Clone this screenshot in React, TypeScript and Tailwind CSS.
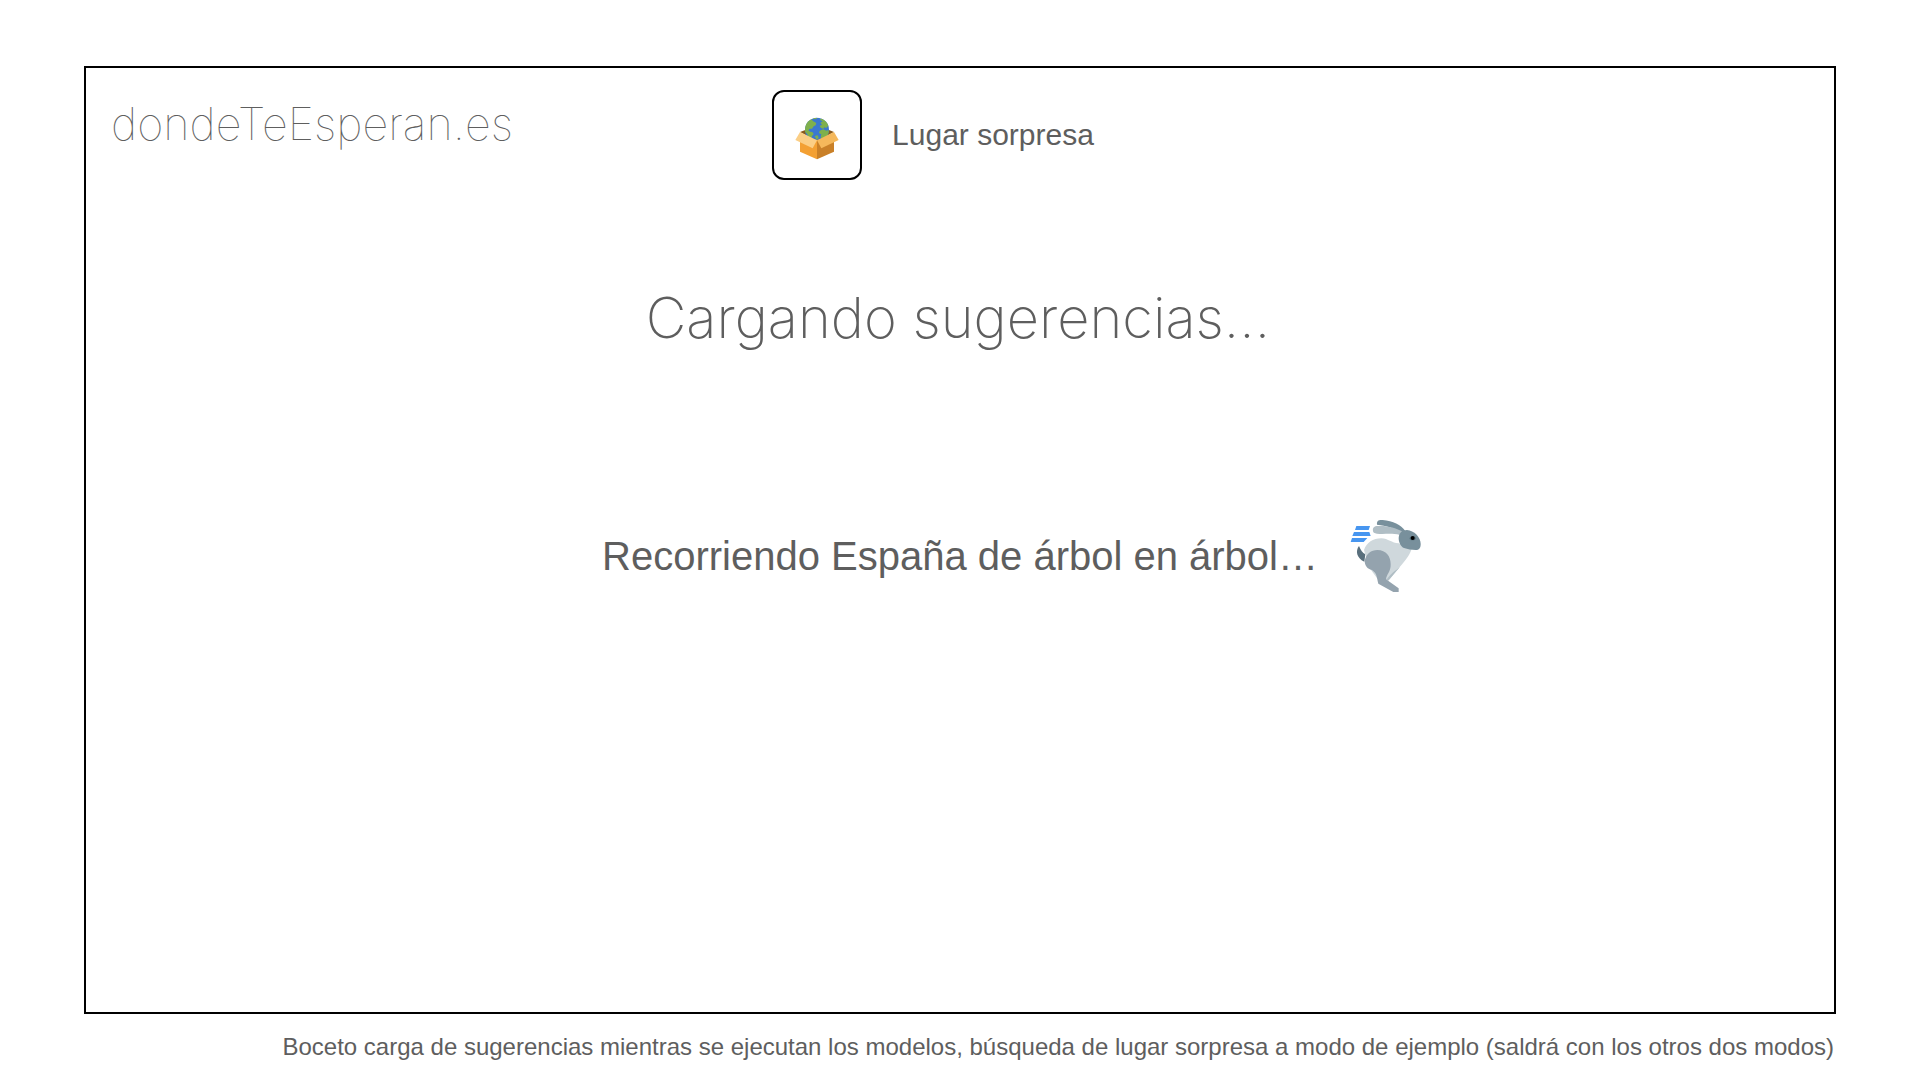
function SurpriseBoxIcon() {
  return (
    <svg viewBox="45 51 132 129" className="h-[43px] w-[44px]" aria-hidden="true">
      <path d="M60 96 76 90 H147 L162 96 111 124Z" fill="#8a5a1c" />
      <clipPath id="globe">
        <circle cx="111" cy="89" r="36" />
      </clipPath>
      <g clipPath="url(#globe)">
        <rect x="74" y="52" width="74" height="75" fill="#3b78d0" />
        <path d="M74 74 84 61 96 57 98 63 104 66 109 69 107 76 101 79 96 86 89 86 85 91 90 95 97 96 101 102 96 108 93 121 85 115 82 102 74 95Z" fill="#7fb04c" />
        <path d="M98 54 112 52 110 56 102 58Z" fill="#7fb04c" />
        <path d="M123 54 136 61 144 70 148 80 143 79 139 84 133 82 130 86 123 84 119 78 126 74 121 68 128 64 120 60Z" fill="#7fb04c" />
        <path d="M119 92 130 88 139 92 145 90 148 98 140 112 128 120 122 112 124 103 117 99Z" fill="#7fb04c" />
        <path d="M104 108 113 106 116 114 110 119Z" fill="#7fb04c" />
      </g>
      <path d="M60 107 111 120 V178 L60 155Z" fill="#f3a033" />
      <path d="M162 107 111 120 V178 L162 155Z" fill="#c98028" />
      <path d="M60 96 111 121 98 145 46 120Z" fill="#fbce85" />
      <path d="M162 96 111 121 124 145 176 120Z" fill="#f5b85b" />
    </svg>
  );
}

function RabbitIcon() {
  return (
    <svg viewBox="28 26 216 222" className="h-[74px] w-[72px]" aria-hidden="true">
      <path d="M47 47H88L84 59H43Z" fill="#4796f0" />
      <path d="M40 65H86L90 77H35Z" fill="#4796f0" />
      <path d="M34 83H80L69 95H30Z" fill="#4796f0" />
      <path d="M55 107C44 121 47 143 71 154L74 132C65 128 61 120 55 107Z" fill="#596f7c" />
      <path d="M109 43C108 32 113 28 126 29C157 32 181 43 194 62L181 69C159 51 137 47 109 43Z" fill="#78909c" />
      <path d="M97 62C95 51 102 46 114 47C143 46 165 53 184 63L178 74C150 67 132 73 109 70C101 69 97 67 97 62Z" fill="#b0bec5" />
      <path d="M70 119C78 97 97 84 122 84C143 85 153 98 174 99L213 116C204 142 184 162 165 184L143 211L111 206L85 171Z" fill="#cfd8dc" />
      <path d="M178 170C165 181 148 190 137 210L144 210L165 185Z" fill="#b0bec5" />
      <path d="M72 151C77 130 91 119 110 119C137 119 150 139 150 161C151 184 137 192 136 207L174 234V245H158L113 220C108 202 110 190 94 179C80 176 72 165 72 151Z" fill="#94a3ae" />
      <path d="M174 86C173 68 185 59 199 59C220 60 240 81 240 101C240 113 235 119 225 119C213 119 201 117 190 113C180 109 175 97 174 86Z" fill="#78909c" />
      <ellipse cx="216" cy="84" rx="9" ry="6" fill="#546e7a" />
      <circle cx="216" cy="83" r="6" fill="#000" />
    </svg>
  );
}

export default function App() {
  return (
    <div className="flex min-h-screen flex-col bg-white px-[84px] pt-[66px] font-['Liberation_Sans',Arial,sans-serif] text-[#5e5e5e]">
      <main className="flex min-h-[948px] flex-col border-2 border-black">
        <header className="grid grid-cols-[1fr_auto_1fr] items-start pt-[22px]">
          <a href="#" className="justify-self-start pl-[25px] font-['Inter',sans-serif] text-[45px] leading-[68px] font-thin">
            dondeTeEsperan.es
          </a>
          <div className="flex items-center gap-[30px] pr-[54px]">
            <button
              type="button"
              aria-label="Lugar sorpresa"
              className="flex h-[90px] w-[90px] items-center justify-center rounded-xl border-2 border-black pt-1.5"
            >
              <SurpriseBoxIcon />
            </button>
            <span className="text-[30px] leading-9">Lugar sorpresa</span>
          </div>
        </header>

        <h1 className="mt-[102px] pr-1 text-center font-['Inter',sans-serif] text-[56px] leading-[72px] font-extralight">
          Cargando sugerencias…
        </h1>

        <div role="status" className="mt-[165px] grid grid-cols-[1fr_auto_1fr] items-center">
          <p className="col-start-2 text-[40px] leading-[48px]">
            Recorriendo España de árbol en árbol…
          </p>
          <div className="pl-8">
            <RabbitIcon />
          </div>
        </div>
      </main>
      <footer className="pt-[15px] pr-0.5 text-right text-[24px] leading-9">
        Boceto carga de sugerencias mientras se ejecutan los modelos, búsqueda de lugar sorpresa a modo de ejemplo (saldrá con los otros dos modos)
      </footer>
    </div>
  );
}
